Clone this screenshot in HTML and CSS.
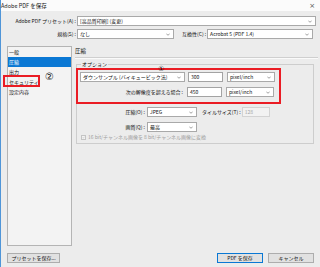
FILE: index.html
```html
<!DOCTYPE html>
<html lang="ja">
<head>
<meta charset="utf-8">
<link rel="stylesheet" href="styles.css">
</head>
<body>
<div class="win">
  <div class="titlebar"><span>Adobe PDF を保存</span><span class="close">×</span></div>
  <div class="row row1">
    <span class="lbl lbl-main">Adobe PDF プリセット(A) :</span>
    <div class="sel sel-preset">[高品質印刷] (変更)<svg class="chev" viewBox="0 0 4 3"><path d="M0.3 0.6 L2 2.3 L3.7 0.6"/></svg></div>
  </div>
  <div class="row row2">
    <span class="lbl lbl-main">規格(S) :</span>
    <div class="sel sel-std">なし<svg class="chev" viewBox="0 0 4 3"><path d="M0.3 0.6 L2 2.3 L3.7 0.6"/></svg></div>
    <span class="lbl lbl-compat">互換性(C) :</span>
    <div class="sel sel-compat">Acrobat 5 (PDF 1.4)<svg class="chev" viewBox="0 0 4 3"><path d="M0.3 0.6 L2 2.3 L3.7 0.6"/></svg></div>
  </div>
  <div class="main">
    <div class="sidebar">
      <div class="item">一般</div>
      <div class="item active">圧縮</div>
      <div class="item">出力</div>
      <div class="item">セキュリティ</div>
      <div class="item">設定内容</div>
    </div>
    <div class="content">
      <div class="heading">圧縮</div>
      <div class="sep"></div>
      <fieldset class="group">
        <legend>オプション</legend>
        <div class="hl">
          <div class="row opt-a">
            <div class="sel sel-down">ダウンサンプル (バイキュービック法)<svg class="chev" viewBox="0 0 4 3"><path d="M0.3 0.6 L2 2.3 L3.7 0.6"/></svg></div>
            <div class="inp">300</div>
            <div class="sel sel-unit">pixel/inch<svg class="chev" viewBox="0 0 4 3"><path d="M0.3 0.6 L2 2.3 L3.7 0.6"/></svg></div>
          </div>
          <div class="row opt-b">
            <span class="lbl lbl-over">次の解像度を超える場合 :</span>
            <div class="inp">450</div>
            <div class="sel sel-unit">pixel/inch<svg class="chev" viewBox="0 0 4 3"><path d="M0.3 0.6 L2 2.3 L3.7 0.6"/></svg></div>
          </div>
        </div>
        <div class="row opt-c">
          <span class="lbl lbl-opt">圧縮(O) :</span>
          <div class="sel sel-small">JPEG<svg class="chev" viewBox="0 0 4 3"><path d="M0.3 0.6 L2 2.3 L3.7 0.6"/></svg></div>
          <span class="lbl lbl-tile">タイルサイズ(T) :</span>
          <div class="inp inp-dis">128</div>
        </div>
        <div class="row opt-d">
          <span class="lbl lbl-opt">画質(Q) :</span>
          <div class="sel sel-small">最高<svg class="chev" viewBox="0 0 4 3"><path d="M0.3 0.6 L2 2.3 L3.7 0.6"/></svg></div>
        </div>
        <div class="row opt-e">
          <span class="cb"><svg viewBox="0 0 5 5"><path d="M1 2.6 L2.1 3.7 L4.1 1.2"/></svg></span>
          <span class="dis-text">16 bit/チャンネル画像を 8 bit/チャンネル画像に変換</span>
        </div>
        <span class="num num1">①</span>
      </fieldset>
    </div>
  </div>
  <div class="footer">
    <div class="btn btn-preset">プリセットを保存...</div>
    <div class="spacer"></div>
    <div class="btn btn-default">PDF を保存</div>
    <div class="btn">キャンセル</div>
  </div>
  <div class="mark"></div>
  <span class="num num2">②</span>
</div>
</body>
</html>
```
FILE: styles.css
```css
html, body {
  margin: 0;
  padding: 0;
}
body {
  width: 320px;
  height: 267px;
  overflow: hidden;
  background: #ececec;
  font-family: "Noto Sans CJK JP", "Liberation Sans", sans-serif;
  font-size: 5px;
  color: #111;
}
.win {
  position: relative;
  height: 267px;
  border-left: 1px solid #4f95d8;
  box-sizing: border-box;
  display: flex;
  flex-direction: column;
}
.titlebar {
  height: 11px;
  flex: none;
  background: #fbfbfb;
  display: flex;
  justify-content: space-between;
  align-items: center;
  padding: 0 5px 0 0;
  font-size: 5.5px;
  color: #222;
}
.close {
  font-size: 7px;
  color: #555;
  font-family: "DejaVu Sans", sans-serif;
}
.row {
  display: flex;
  align-items: center;
  height: 10px;
  flex: none;
}
.row1 { margin-top: 5px; }
.row2 { margin-top: 3px; }
.lbl {
  white-space: nowrap;
  line-height: 10px;
}
.lbl-main {
  width: 75px;
  text-align: right;
  margin-right: 1px;
}
.lbl-compat {
  margin-left: 8px;
  margin-right: 1px;
}
.sel, .inp {
  position: relative;
  height: 10px;
  box-sizing: border-box;
  background: #fff;
  border: 1px solid #a9a9a9;
  line-height: 8px;
  padding-left: 2px;
  white-space: nowrap;
  overflow: hidden;
}
.chev {
  position: absolute;
  right: 3px;
  top: 3px;
  width: 4px;
  height: 3px;
  fill: none;
  stroke: #606060;
  stroke-width: 0.6;
}
.sel-preset { width: 239px; }
.sel-std { width: 97px; }
.sel-compat { width: 106px; }

.main {
  display: flex;
  margin-top: 7px;
  flex: none;
}
.sidebar {
  margin-left: 6px;
  width: 65px;
  height: 200px;
  box-sizing: border-box;
  border: 1px solid #b4b4b4;
  background: #f3f3f3;
}
.item {
  height: 10px;
  line-height: 10px;
  padding-left: 1px;
}
.item.active {
  background: #0a78d4;
  color: #fff;
}
.content {
  margin-left: 3px;
  width: 243px;
  display: flex;
  flex-direction: column;
}
.heading {
  height: 10px;
  line-height: 10px;
  font-size: 5.5px;
}
.sep {
  margin-top: 1px;
  height: 0;
  border-top: 1px solid #cfcfcf;
  border-bottom: 1px solid #fafafa;
}
.group {
  position: relative;
  margin: 0 0 0 1px;
  width: 238px;
  box-sizing: border-box;
  border: 1px solid #cdcdcd;
  padding: 0 0 2px 0;
  min-width: 0;
}
.group legend {
  margin-left: 4px;
  padding: 0 1px;
  line-height: 10px;
  height: 10px;
}
.hl {
  margin-left: -1px;
  margin-top: -1px;
  width: 205px;
  box-sizing: border-box;
  border: 2px solid #ea1c24;
  padding: 2px 0 5px 2px;
}
.opt-b { margin-top: 5px; }
.sel-down { width: 105px; }
.inp {
  width: 35px;
  margin-left: 3px;
  border-color: #a3a3a3;
}
.sel-unit {
  width: 48px;
  margin-left: 4px;
}
.lbl-over {
  width: 104px;
  text-align: right;
  padding-right: 1px;
  box-sizing: border-box;
}
.opt-c { margin-top: 3px; }
.opt-d { margin-top: 5px; }
.lbl-opt {
  width: 68px;
  text-align: right;
  margin-right: 2px;
}
.sel-small { width: 50px; }
.lbl-tile {
  margin-left: 5px;
}
.inp-dis {
  width: 28px;
  margin-left: 1px;
  background: #f2f2f2;
  border-color: #d3d3d3;
  color: #a5a5a5;
}
.opt-e {
  margin-top: 1px;
  height: 8px;
}
.cb {
  margin-left: 4px;
  width: 5px;
  height: 5px;
  box-sizing: border-box;
  border: 1px solid #c4c4c4;
  background: #f4f4f4;
  display: flex;
}
.cb svg {
  width: 100%;
  height: 100%;
  fill: none;
  stroke: #b0b0b0;
  stroke-width: 0.8;
}
.dis-text {
  margin-left: 2px;
  color: #a0a0a0;
  line-height: 8px;
}
.footer {
  display: flex;
  margin-top: 7px;
  padding: 0 6px 0 6px;
  flex: none;
}
.spacer { flex: 1; }
.btn {
  height: 10px;
  box-sizing: border-box;
  width: 46px;
  border: 1px solid #adadad;
  background: #e1e1e1;
  line-height: 8px;
  text-align: center;
  margin-left: 5px;
  white-space: nowrap;
}
.btn-preset {
  width: 53px;
  margin-left: 0;
}
.btn-default {
  border-color: #0a78d4;
}
.mark {
  position: absolute;
  left: 2px;
  top: 75px;
  width: 37px;
  height: 12px;
  box-sizing: border-box;
  border: 2px solid #ea1c24;
}
.num {
  position: absolute;
  font-family: "DejaVu Sans", sans-serif;
  color: #111;
  line-height: 1;
}
.num2 {
  left: 44px;
  top: 72px;
  font-size: 10px;
}
.num1 {
  left: 81px;
  top: -3px;
  font-size: 7px;
}
```
